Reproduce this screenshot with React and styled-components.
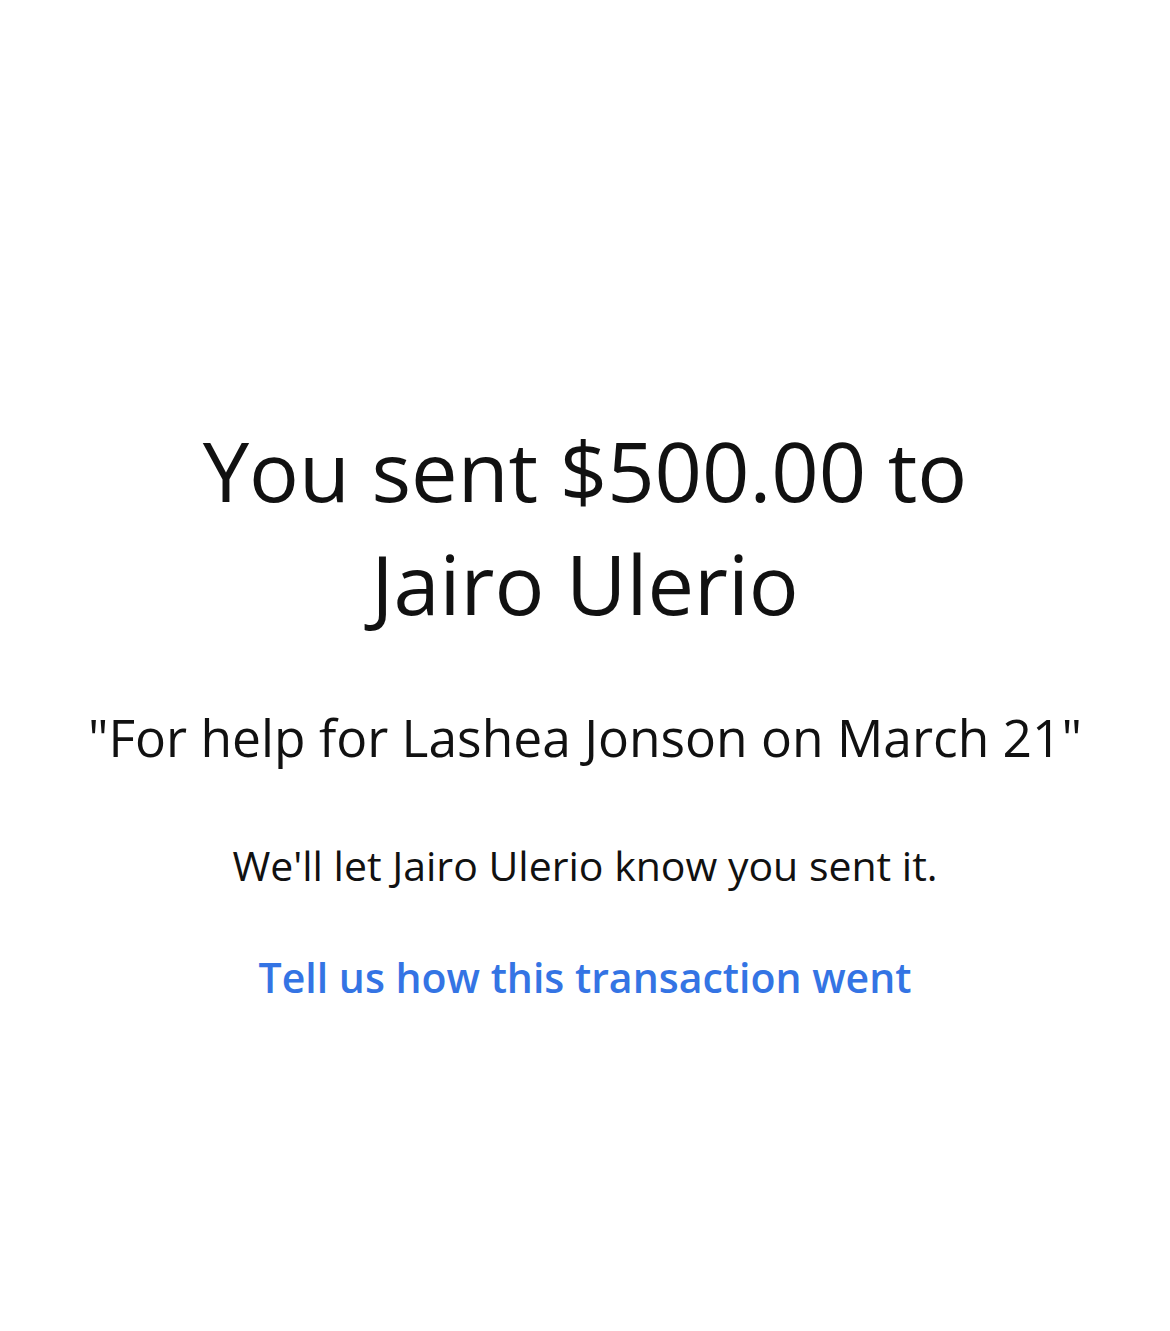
import React from 'react';
import styled, {createGlobalStyle} from "styled-components";

const GlobalStyle = createGlobalStyle`
  html, body {
    margin: 0;
    padding: 0;
    background: #ffffff;
  }
  body {
    font-family: "Open Sans", "Noto Sans", sans-serif;
    color: #111111;
  }
`

let Page = styled.div`
  min-height: 1331px;
  display: flex;
  flex-direction: column;
  align-items: center;
  padding-top: 413px;
  box-sizing: border-box;
  text-align: center;
`

let Title = styled.h1`
  margin: 0;
  font-size: 83px;
  line-height: 113px;
  font-weight: 400;
  color: #111111;
`

let Note = styled.p`
  margin: 67px 0 0;
  font-size: 51.5px;
  line-height: 62px;
  font-weight: 400;
`

let Info = styled.p`
  margin: 71px 0 0;
  font-size: 41px;
  line-height: 52px;
  font-weight: 400;
`

let FeedbackLink = styled.a`
  margin-top: 60px;
  font-size: 41px;
  line-height: 52px;
  font-weight: 600;
  color: #3474e4;
  text-decoration: none;
  cursor: pointer;
`

const App = () => {
    return (
        <>
            <GlobalStyle/>
            <Page>
                <Title>You sent $500.00 to<br/>Jairo Ulerio</Title>
                <Note>"For help for Lashea Jonson on March 21"</Note>
                <Info>We'll let Jairo Ulerio know you sent it.</Info>
                <FeedbackLink>Tell us how this transaction went</FeedbackLink>
            </Page>
        </>
    );
};

export default App;
